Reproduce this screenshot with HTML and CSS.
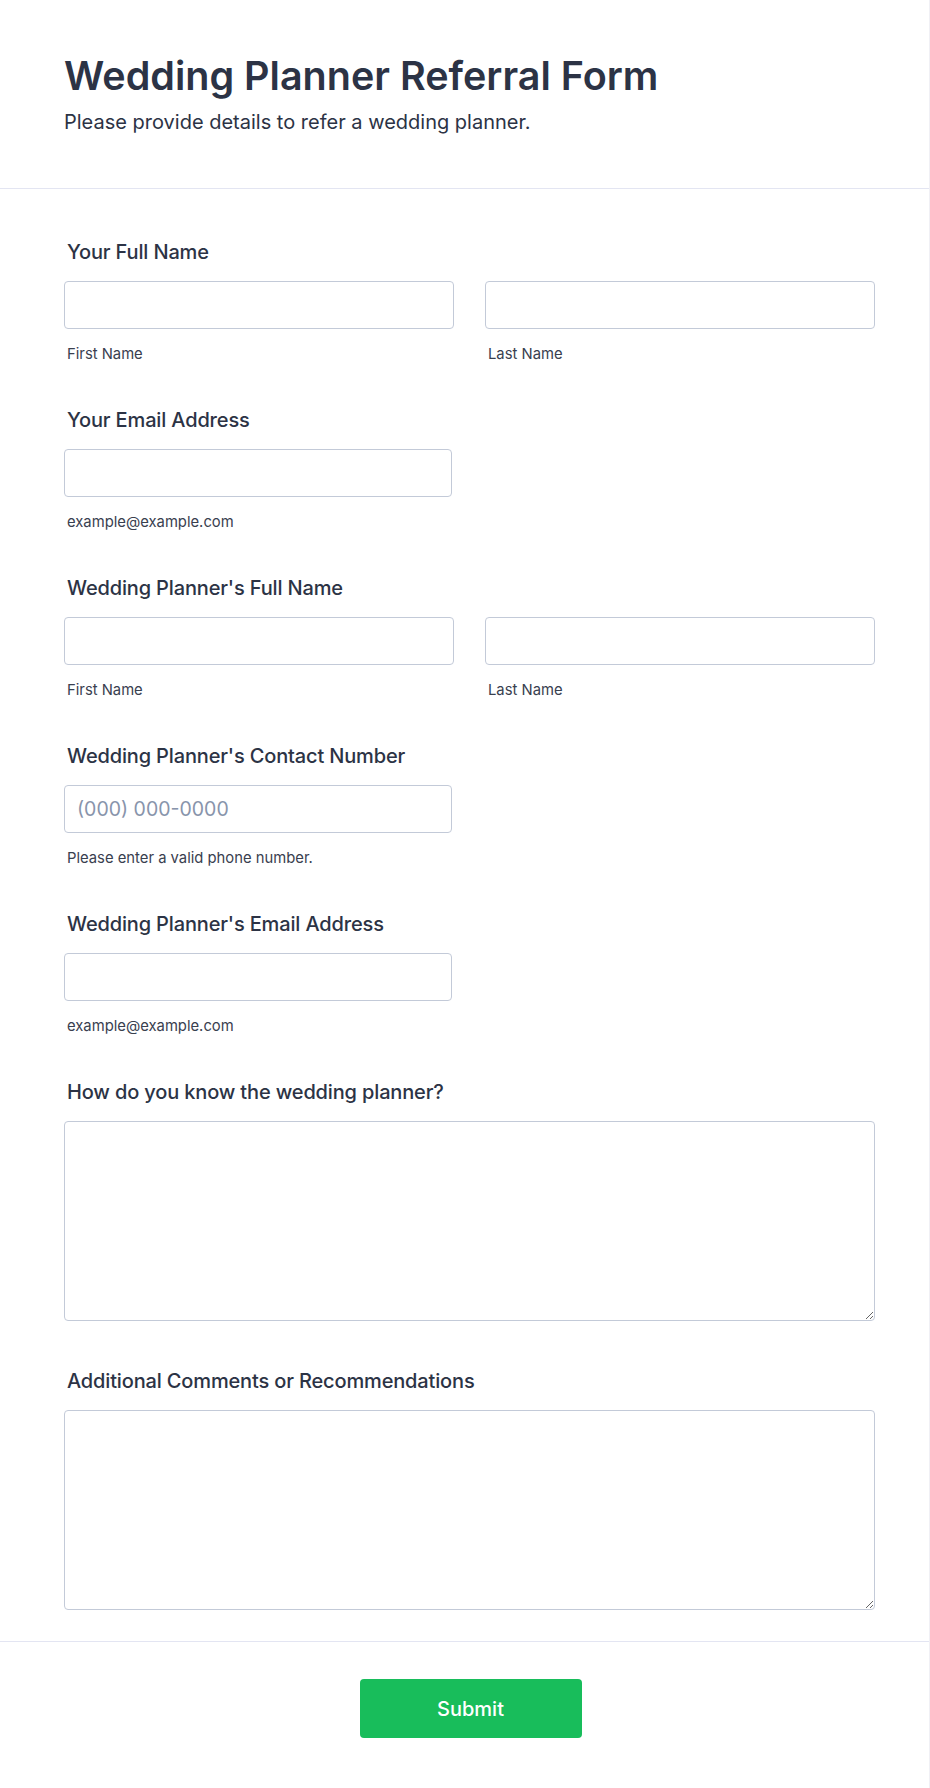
FILE: index.html
```html
<!DOCTYPE html>
<html lang="en">
<head>
<meta charset="utf-8">
<title>Wedding Planner Referral Form</title>
<link rel="stylesheet" href="styles.css">
</head>
<body>
<form class="page">
  <header class="form-header">
    <h1 class="form-title">Wedding Planner Referral Form</h1>
    <p class="form-subtitle">Please provide details to refer a wedding planner.</p>
  </header>

  <section class="fields">
    <div class="field">
      <label class="field-label">Your Full Name</label>
      <div class="pair">
        <div class="col">
          <input class="input" type="text">
          <span class="sublabel">First Name</span>
        </div>
        <div class="col">
          <input class="input" type="text">
          <span class="sublabel">Last Name</span>
        </div>
      </div>
    </div>

    <div class="field">
      <label class="field-label">Your Email Address</label>
      <div class="single">
        <input class="input" type="email">
        <span class="sublabel">example@example.com</span>
      </div>
    </div>

    <div class="field">
      <label class="field-label">Wedding Planner's Full Name</label>
      <div class="pair">
        <div class="col">
          <input class="input" type="text">
          <span class="sublabel">First Name</span>
        </div>
        <div class="col">
          <input class="input" type="text">
          <span class="sublabel">Last Name</span>
        </div>
      </div>
    </div>

    <div class="field">
      <label class="field-label">Wedding Planner's Contact Number</label>
      <div class="single">
        <input class="input" type="tel" placeholder="(000) 000-0000">
        <span class="sublabel">Please enter a valid phone number.</span>
      </div>
    </div>

    <div class="field">
      <label class="field-label">Wedding Planner's Email Address</label>
      <div class="single">
        <input class="input" type="email">
        <span class="sublabel">example@example.com</span>
      </div>
    </div>

    <div class="field field-area">
      <label class="field-label">How do you know the wedding planner?</label>
      <textarea class="textarea"></textarea>
    </div>

    <div class="field field-area last">
      <label class="field-label">Additional Comments or Recommendations</label>
      <textarea class="textarea"></textarea>
    </div>
  </section>

  <footer class="form-footer">
    <button type="button" class="submit">Submit</button>
  </footer>
</form>
</body>
</html>
```

FILE: styles.css
```css
* { box-sizing: border-box; }

html, body {
  margin: 0;
  padding: 0;
  background: #ffffff;
}

body {
  font-family: Inter, "Noto Sans", "Liberation Sans", sans-serif;
  color: #2c3345;
}

.page {
  width: 930px;
  min-height: 1788px;
  border-right: 1px solid #f0f0f5;
}

.form-header {
  padding: 52px 64px 53px 64px;
  border-bottom: 1px solid #e3e5f2;
}

.form-title {
  margin: 0;
  font-size: 39.5px;
  line-height: 48px;
  font-weight: 600;
  color: #2c3345;
}

.form-subtitle {
  margin: 9px 0 0 0;
  font-size: 20px;
  line-height: 26px;
  font-weight: 400;
  color: #2c3345;
}

.fields {
  padding: 51px 55px 31px 64px;
}

.field {
  margin-bottom: 45px;
}

.field-area {
  margin-bottom: 48px;
}

.field.last {
  margin-bottom: 0;
}

.field-label {
  display: block;
  margin: 0 0 17px 3px;
  font-size: 20px;
  line-height: 24px;
  font-weight: 500;
  letter-spacing: -0.15px;
  color: #2c3345;
}

.pair {
  display: grid;
  grid-template-columns: 390px 390px;
  column-gap: 31px;
}

.col,
.single {
  display: flex;
  flex-direction: column;
}

.single {
  width: 388px;
}

.input {
  display: block;
  width: 100%;
  height: 48px;
  margin: 0;
  padding: 0 12px;
  border: 1px solid #c3cad8;
  border-radius: 4px;
  background: #ffffff;
  font-family: Inter, "Noto Sans", "Liberation Sans", sans-serif;
  font-size: 19.5px;
  color: #2c3345;
  outline: none;
}

.input::placeholder {
  color: #8894ab;
  opacity: 1;
}

.sublabel {
  display: block;
  margin: 16px 0 0 3px;
  font-size: 14.8px;
  line-height: 18px;
  color: #39404f;
}

.textarea {
  display: block;
  width: 811px;
  height: 200px;
  margin: 0;
  padding: 10px 12px;
  border: 1px solid #c3cad8;
  border-radius: 4px;
  background: #ffffff;
  font-family: Inter, "Noto Sans", "Liberation Sans", sans-serif;
  font-size: 20px;
  color: #2c3345;
  resize: vertical;
  outline: none;
}

.form-footer {
  display: flex;
  justify-content: center;
  padding: 37px 0 50px 0;
  border-top: 1px solid #e3e5f2;
}

.submit {
  width: 222px;
  height: 59px;
  margin-left: 12px;
  border: none;
  border-radius: 4px;
  background: #18bd5b;
  color: #ffffff;
  font-family: Inter, "Noto Sans", "Liberation Sans", sans-serif;
  font-size: 20px;
  font-weight: 500;
  cursor: pointer;
}
```
